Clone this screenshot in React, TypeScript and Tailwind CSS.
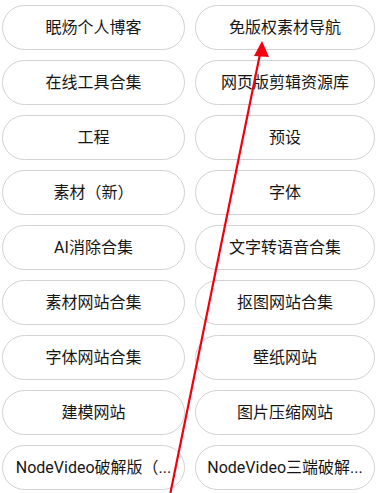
const links: [string, string][] = [
  ["眠炀个人博客", "免版权素材导航"],
  ["在线工具合集", "网页版剪辑资源库"],
  ["工程", "预设"],
  ["素材（新）", "字体"],
  ["AI消除合集", "文字转语音合集"],
  ["素材网站合集", "抠图网站合集"],
  ["字体网站合集", "壁纸网站"],
  ["建模网站", "图片压缩网站"],
  // labels are shortened in the app itself
  ["NodeVideo破解版（...", "NodeVideo三端破解..."],
]

function Pill({ label, className }: { label: string; className: string }) {
  return (
    <div
      className={`flex h-[45px] items-center justify-center rounded-full border border-[#d2d2d2] bg-white px-[10px] ${className}`}
    >
      <span className="whitespace-nowrap text-[16px] text-[#161616]">{label}</span>
    </div>
  )
}

export default function App() {
  return (
    <div
      className="relative h-[493px] w-[376px] overflow-hidden bg-white"
      style={{ fontFamily: 'Roboto, "Noto Sans CJK SC", sans-serif' }}
    >
      <div className="flex flex-col gap-[10px] pt-[5px] pl-[2px]">
        {links.map(([a, b]) => (
          <div key={a} className="flex gap-[10px]">
            <Pill label={a} className="w-[183px]" />
            <Pill label={b} className="w-[180px]" />
          </div>
        ))}
      </div>

      {/* annotation arrow */}
      <svg className="pointer-events-none absolute inset-0" width="376" height="493" viewBox="0 0 376 493">
        <line x1="170" y1="495" x2="260" y2="54" stroke="#f2000f" strokeWidth="2.2" />
        <polygon points="262,41 254,56 269,57" fill="#f2000f" />
      </svg>
    </div>
  )
}
